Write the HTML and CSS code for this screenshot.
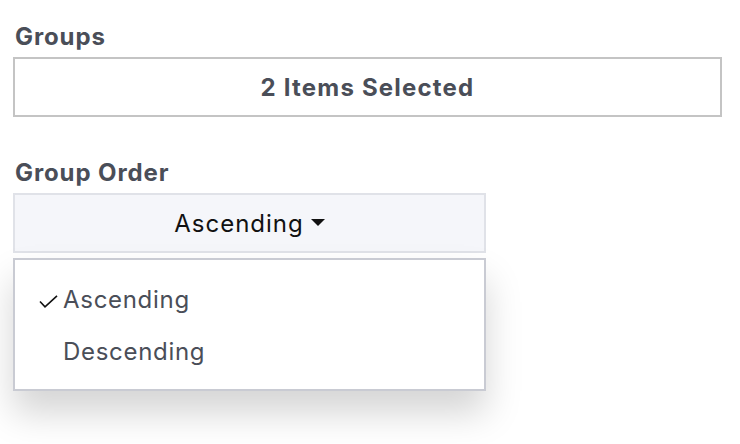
FILE: index.html
```html
<!DOCTYPE html>
<html>
<head>
<meta charset="utf-8">
<link rel="stylesheet" href="styles.css">
</head>
<body>
<div class="panel">
  <section class="field">
    <div class="label">Groups</div>
    <div class="select-box">2 Items Selected</div>
  </section>
  <section class="field order">
    <div class="label">Group Order</div>
    <div class="dropdown">
      <button class="toggle">Ascending <span class="caret"></span></button>
      <ul class="menu">
        <li class="item selected"><svg class="check" width="19" height="13" viewBox="0 0 19 13"><polyline points="1,6.5 6,11.8 18,0.8" fill="none" stroke="#111" stroke-width="1.6"/></svg>Ascending</li>
        <li class="item">Descending</li>
      </ul>
    </div>
  </section>
</div>
</body>
</html>
```
FILE: styles.css
```css
html, body {
  margin: 0;
  padding: 0;
  background: #ffffff;
}
body {
  font-family: Inter, "Noto Sans", "Liberation Sans", sans-serif;
  color: #4a4e58;
  min-height: 444px;
}
.panel {
  display: flex;
  flex-direction: column;
  padding: 22px 18px 54px 13px;
}
.field {
  display: flex;
  flex-direction: column;
}
.label {
  font-size: 24px;
  font-weight: 700;
  letter-spacing: 0.9px;
  line-height: 30px;
  padding-left: 2px;
  margin-bottom: 5px;
}
.select-box {
  height: 56px;
  border: 2px solid #c4c4c4;
  display: flex;
  align-items: center;
  justify-content: center;
  font-size: 24px;
  font-weight: 700;
  letter-spacing: 1.2px;
}
.order {
  margin-top: 41px;
  width: 473px;
}
.dropdown {
  display: flex;
  flex-direction: column;
  gap: 5px;
}
.toggle {
  height: 60px;
  border: 2px solid #e0e2e8;
  background: #f5f6fa;
  font-family: inherit;
  font-size: 24px;
  letter-spacing: 1px;
  color: #111111;
  display: flex;
  align-items: center;
  justify-content: center;
  gap: 7px;
  padding: 0;
}
.caret {
  width: 0;
  height: 0;
  border-left: 7px solid transparent;
  border-right: 7px solid transparent;
  border-top: 7px solid #111111;
  margin-top: -2px;
}
.menu {
  list-style: none;
  margin: 0;
  padding: 13px 0 12px 0;
  border: 2px solid #c9cbd3;
  background: #fff;
  box-shadow: 0 22px 34px rgba(0, 0, 0, 0.17);
}
.item {
  height: 52px;
  display: flex;
  align-items: center;
  padding-left: 48px;
  position: relative;
  font-size: 24px;
  letter-spacing: 0.7px;
  color: #4a4e58;
}
.check {
  position: absolute;
  left: 24px;
  top: 22px;
}
```
